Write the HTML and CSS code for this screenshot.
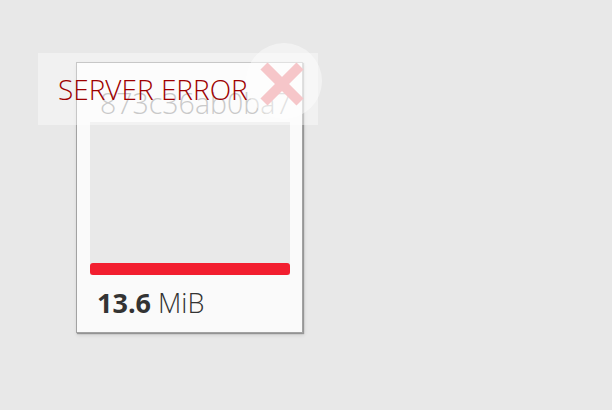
FILE: index.html
```html
<!DOCTYPE html>
<html>
<head>
<meta charset="utf-8">
<link rel="stylesheet" href="styles.css">
</head>
<body>
<div class="stage">
  <div class="card">
    <div class="title">873c36ab0ba7</div>
    <div class="preview">
      <div class="bar"></div>
    </div>
    <div class="size"><b>13.6</b> MiB</div>
  </div>
  <div class="error">
    <span class="error-text">SERVER ERROR</span>
  </div>
  <div class="error-circle">
    <svg class="error-x" width="44" height="44" viewBox="0 0 44 44">
      <line x1="4" y1="4" x2="40" y2="40" stroke="#f6c6c9" stroke-width="10"/>
      <line x1="40" y1="4" x2="4" y2="40" stroke="#f6c6c9" stroke-width="10"/>
    </svg>
  </div>
</div>
</body>
</html>
```

FILE: styles.css
```css
html, body {
  margin: 0;
  padding: 0;
  background: #e8e8e8;
  font-family: "Open Sans", "Noto Sans", sans-serif;
}
.stage {
  position: relative;
  width: 612px;
  height: 410px;
  padding: 62px 0 0 76px;
  box-sizing: border-box;
}
.card {
  width: 227px;
  height: 271px;
  box-sizing: border-box;
  background: #fafafa;
  border: 1px solid #a2a2a2;
  box-shadow: 1px 1px 1px rgba(0, 0, 0, 0.3), 1px 2px 4px rgba(0, 0, 0, 0.12);
  padding: 0 12px 0 13px;
  display: flex;
  flex-direction: column;
}
.title {
  font-size: 28.5px;
  font-weight: 300;
  color: #a6a6a6;
  line-height: 38px;
  margin-top: 21px;
  padding-left: 10px;
  white-space: nowrap;
  overflow: hidden;
  width: 190px;
}
.preview {
  flex: 1;
  background: #e9e9e9;
  display: flex;
  flex-direction: column;
  justify-content: flex-end;
}
.bar {
  height: 12px;
  background: #f21e2f;
  border-radius: 3px;
}
.size {
  font-size: 27px;
  font-weight: 300;
  color: #333;
  line-height: 32px;
  padding: 12px 0 0 7px;
  height: 57px;
  box-sizing: border-box;
}
.size b {
  font-weight: 700;
}
.error {
  position: absolute;
  left: 38px;
  top: 53px;
  width: 280px;
  height: 72px;
  background: rgba(255, 255, 255, 0.4);
  box-sizing: border-box;
  padding: 16px 0 0 20px;
}
.error-text {
  font-size: 28px;
  font-weight: 300;
  color: #9e0000;
  line-height: 40px;
  white-space: nowrap;
}
.error-circle {
  position: absolute;
  left: 246px;
  top: 43px;
  width: 76px;
  height: 76px;
  border-radius: 50%;
  background: rgba(255, 255, 255, 0.45);
}
.error-x {
  position: absolute;
  left: 14px;
  top: 19px;
}
```
